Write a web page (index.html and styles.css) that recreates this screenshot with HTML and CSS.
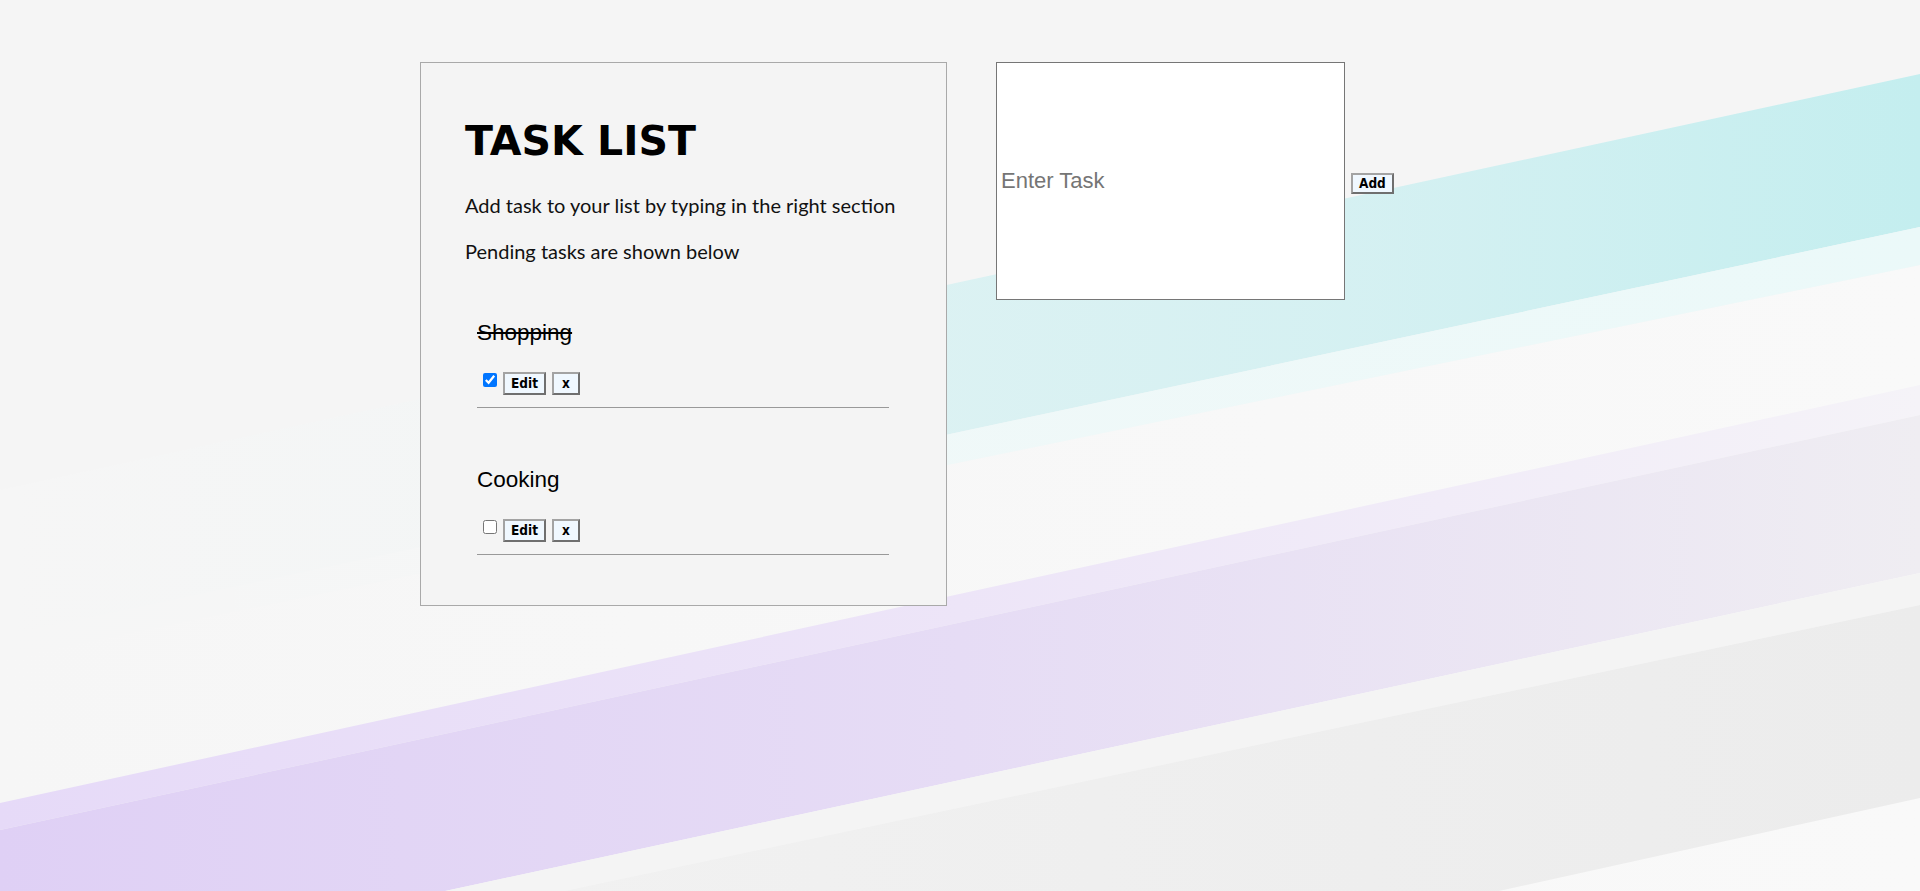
FILE: index.html
```html
<!DOCTYPE html>
<html lang="en">
<head>
<meta charset="utf-8">
<title>Task List</title>
<link rel="stylesheet" href="styles.css">
</head>
<body>
<main class="wrap">
  <section class="card">
    <h1 class="title">TASK LIST</h1>
    <p class="lead lead-first">Add task to your list by typing in the right section</p>
    <p class="lead">Pending tasks are shown below</p>
    <ul class="tasks">
      <li class="task">
        <div class="task-name done">Shopping</div>
        <div class="task-controls">
          <input class="check" type="checkbox" checked>
          <button class="btn" type="button">Edit</button>
          <button class="btn" type="button">x</button>
        </div>
      </li>
      <li class="task">
        <div class="task-name">Cooking</div>
        <div class="task-controls">
          <input class="check" type="checkbox">
          <button class="btn" type="button">Edit</button>
          <button class="btn" type="button">x</button>
        </div>
      </li>
    </ul>
  </section>
  <div class="entry">
    <input class="entry-input" type="text" placeholder="Enter Task">
    <button class="btn btn-add" type="button">Add</button>
  </div>
</main>
</body>
</html>
```
FILE: styles.css
```css
html {
  height: 100%;
  background-color: #f5f5f5;
  background-image: url("data:image/svg+xml,%3Csvg xmlns='http://www.w3.org/2000/svg' viewBox='0 0 1920 891' preserveAspectRatio='none'%3E%3Cdefs%3E%3ClinearGradient id='t' x1='0' x2='1' y1='0' y2='0'%3E%3Cstop offset='0' stop-color='%23c6eef0' stop-opacity='0'/%3E%3Cstop offset='0.22' stop-color='%23c6eef0' stop-opacity='0.05'/%3E%3Cstop offset='0.49' stop-color='%23c6eef0' stop-opacity='0.55'/%3E%3Cstop offset='0.72' stop-color='%23c6eef0' stop-opacity='0.7'/%3E%3Cstop offset='1' stop-color='%23c4eeef'/%3E%3C/linearGradient%3E%3ClinearGradient id='lt' x1='0' x2='1' y1='0' y2='0'%3E%3Cstop offset='0' stop-color='%23eef9f9' stop-opacity='0'/%3E%3Cstop offset='0.22' stop-color='%23eef9f9' stop-opacity='0.1'/%3E%3Cstop offset='0.5' stop-color='%23eef9f9' stop-opacity='0.8'/%3E%3Cstop offset='1' stop-color='%23ebf9f9'/%3E%3C/linearGradient%3E%3ClinearGradient id='l1' x1='0' x2='1' y1='0' y2='0'%3E%3Cstop offset='0' stop-color='%23e6daf8'/%3E%3Cstop offset='0.5' stop-color='%23ede5f8'/%3E%3Cstop offset='1' stop-color='%23f5f3f8'/%3E%3C/linearGradient%3E%3ClinearGradient id='l2' x1='0' x2='1' y1='0' y2='0'%3E%3Cstop offset='0' stop-color='%23dfd0f5'/%3E%3Cstop offset='0.5' stop-color='%23e6dcf5'/%3E%3Cstop offset='1' stop-color='%23efedf2'/%3E%3C/linearGradient%3E%3ClinearGradient id='g' x1='0' x2='1' y1='0' y2='0'%3E%3Cstop offset='0' stop-color='%23f3f3f3'/%3E%3Cstop offset='1' stop-color='%23ececec'/%3E%3C/linearGradient%3E%3ClinearGradient id='w' x1='0' x2='1' y1='0' y2='0'%3E%3Cstop offset='0' stop-color='%23f6f6f6'/%3E%3Cstop offset='1' stop-color='%23f9f9f9'/%3E%3C/linearGradient%3E%3C/defs%3E%3Crect width='1920' height='891' fill='%23f5f5f5'/%3E%3Cpolygon points='0,490 1920,74 1920,891 0,891' fill='%23f6f6f6'/%3E%3Cpolygon points='0,660 1920,265 1920,891 0,891' fill='url(%23w)'/%3E%3Cpolygon points='0,490 1920,74 1920,227 0,637' fill='url(%23t)'/%3E%3Cpolygon points='0,637 1920,227 1920,265 0,660' fill='url(%23lt)'/%3E%3Cpolygon points='0,803 1920,385 1920,415 0,830' fill='url(%23l1)'/%3E%3Cpolygon points='0,830 1920,415 1920,573 0,987' fill='url(%23l2)'/%3E%3Cpolygon points='0,987 1920,573 1920,605 0,1010' fill='%23f4f4f4'/%3E%3Cpolygon points='0,1010 1920,605 1920,798 1499,891 0,891' fill='url(%23g)'/%3E%3C/svg%3E");
  background-repeat: no-repeat;
  background-size: 100% 100%;
}

body {
  margin: 0;
  min-height: 100%;
  font-family: "Liberation Sans", Arial, sans-serif;
  color: #000;
}

.wrap {
  width: 1080px;
  margin: 0 auto;
  padding-top: 62px;
  display: flex;
  align-items: flex-start;
}

.card {
  box-sizing: border-box;
  width: 527px;
  padding: 55px 44px 50px;
  background: #f4f4f4;
  border: 1px solid #a9a9a9;
}

.title {
  margin: 0;
  font-family: "DejaVu Sans", Verdana, sans-serif;
  font-weight: bold;
  font-size: 41px;
  line-height: 47px;
  color: #000;
}

.lead {
  margin: 20px 0 0;
  font-family: Lato, "Open Sans", sans-serif;
  font-size: 20px;
  line-height: 26px;
  white-space: nowrap;
  color: #111;
}

.lead-first {
  margin-top: 27px;
}

.tasks {
  list-style: none;
  margin: 0 13px 0 12px;
  padding: 0;
}

.task {
  margin-top: 56px;
  padding-bottom: 12px;
  border-bottom: 1px solid #999;
}

.task + .task {
  margin-top: 59px;
}

.task-name {
  font-family: "Liberation Sans", Arial, sans-serif;
  font-size: 22.5px;
  line-height: 26px;
  color: #000;
}

.done {
  text-decoration: line-through;
}

.task-controls {
  display: flex;
  align-items: flex-start;
  gap: 6px;
  margin-top: 26px;
  padding-left: 6px;
}

.check {
  margin: 1px 0 0 0;
  width: 14px;
  height: 14px;
}

.btn {
  box-sizing: border-box;
  height: 23px;
  min-width: 28px;
  padding: 0 6px;
  margin: 0;
  font-family: "DejaVu Sans Condensed", "DejaVu Sans", Verdana, sans-serif;
  font-weight: bold;
  font-size: 13.5px;
  line-height: 19px;
  color: #000;
  background: #f0f8ff;
  border: 2px solid;
  border-color: #a3a3a3 #6f6f6f #6f6f6f #a3a3a3;
  border-radius: 0;
}

.entry {
  display: flex;
  align-items: center;
  margin-left: 49px;
}

.entry-input {
  box-sizing: border-box;
  width: 349px;
  height: 238px;
  margin: 0;
  padding: 0 4px;
  font-family: "Liberation Sans", Arial, sans-serif;
  font-size: 22px;
  color: #000;
  background: #fff;
  border: 1px solid #767676;
  border-radius: 0;
}

.entry-input::placeholder {
  color: #757575;
}

.btn-add {
  height: 21px;
  line-height: 17px;
  margin-left: 6px;
  margin-top: 4px;
  padding: 0 6px;
}
```
